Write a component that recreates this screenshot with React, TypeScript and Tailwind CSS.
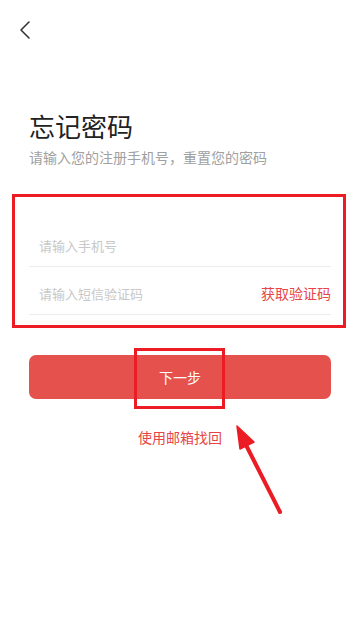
const font = { fontFamily: '"Noto Sans CJK SC", "Noto Sans", sans-serif' };

export default function App() {
  return (
    <div
      className="relative h-[617px] w-[360px] overflow-hidden bg-white"
      style={font}
    >
      {/* top bar */}
      <div className="flex h-[60px] items-start pl-[18px] pt-[20px]">
        <svg width="14" height="20" viewBox="0 0 14 20" fill="none">
          <path d="M11 2 L3 10 L11 18" stroke="#333" strokeWidth="1.6" strokeLinecap="round" strokeLinejoin="round" />
        </svg>
      </div>

      <div className="px-[29px]">
        <h1 className="mt-[49px] text-[26px] leading-[34px] text-[#222]">忘记密码</h1>
        <p className="mt-[4px] text-[14px] leading-[20px] text-[#a0a0a0]">
          请输入您的注册手机号，重置您的密码
        </p>

        <div className="mt-[52px]">
          <div className="flex h-[48px] items-center border-b border-[#ececec] pl-[10px] pt-[6px]">
            <span className="text-[13px] text-[#c8c8c8]">请输入手机号</span>
          </div>
          <div className="flex h-[48px] items-center justify-between border-b border-[#ececec] pl-[10px] pt-[6px]">
            <span className="text-[13px] text-[#c8c8c8]">请输入短信验证码</span>
            <span className="text-[14px] text-[#e84545]">获取验证码</span>
          </div>
        </div>

        <button
          type="button"
          className="mt-[40px] flex h-[44px] w-full items-center justify-center rounded-[7px] bg-[#e5514c] text-[14px] text-white"
        >
          下一步
        </button>

        <div className="mt-[28px] text-center text-[14px] text-[#e84545]">使用邮箱找回</div>
      </div>

      {/* annotations */}
      <div className="absolute left-[12px] top-[194px] h-[134px] w-[334px] border-[3px] border-[#ec1c24]" />
      <div className="absolute left-[134px] top-[348px] h-[61px] w-[91px] border-[3px] border-[#ec1c24]" />
      <svg className="absolute left-0 top-0" width="360" height="617" viewBox="0 0 360 617">
        <line x1="280" y1="512" x2="246" y2="445" stroke="#ec1c24" strokeWidth="4" strokeLinecap="round" />
        <polygon points="237,426 254,442 240,449" fill="#ec1c24" stroke="#ec1c24" strokeWidth="1.5" strokeLinejoin="round" />
      </svg>
    </div>
  );
}
